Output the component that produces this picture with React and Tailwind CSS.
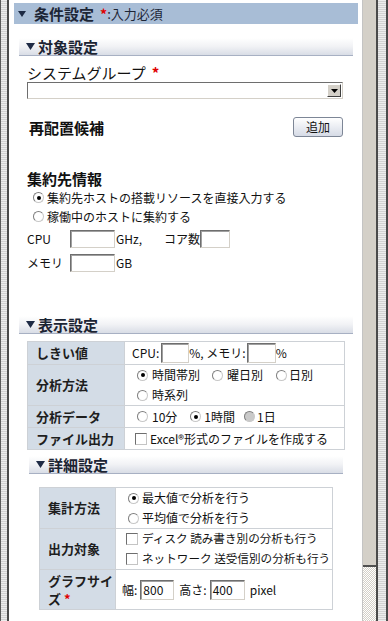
import React from 'react';

function Tri({ className = '', w = 9, h = 7, color = '#1f2b45' }) {
  return (
    <svg width={w} height={h} viewBox={`0 0 ${w} ${h}`} className={className}>
      <polygon points={`0,0 ${w},0 ${w / 2},${h}`} fill={color} />
    </svg>
  );
}

function Band({ title, className = '' }) {
  return (
    <div
      className={`flex h-[18px] items-center border-b border-[#a7b0c3] bg-linear-to-b from-white via-[#f1f2f5] to-[#d9dde6] ${className}`}
    >
      <Tri className="ml-[7px] mr-[3px]" />
      <span className="text-[15px] font-bold leading-none text-[#1c2433]">{title}</span>
    </div>
  );
}

function Radio({ checked, disabled, className = '' }) {
  return (
    <span
      className={`inline-flex h-[11px] w-[11px] shrink-0 items-center justify-center rounded-full border border-t-[#7e7e7e] border-l-[#7e7e7e] border-b-[#c8c8c8] border-r-[#c8c8c8] ${
        disabled ? 'bg-[#c9c9c9]' : 'bg-white'
      } ${className}`}
    >
      {checked && <span className="h-[4px] w-[4px] rounded-full bg-black" />}
    </span>
  );
}

function Check({ className = '' }) {
  return (
    <span
      className={`inline-block h-[12px] w-[12px] shrink-0 border border-t-[#6e6e6e] border-l-[#6e6e6e] border-b-[#c4c4c4] border-r-[#c4c4c4] bg-white ${className}`}
    />
  );
}

function Field({ className = '', children }) {
  return (
    <span
      className={`inline-flex shrink-0 items-center border border-t-[#6e6e6e] border-l-[#6e6e6e] border-b-[#d4d0c8] border-r-[#d4d0c8] bg-white pl-[2px] shadow-[inset_1px_1px_0_#a0a0a0] ${className}`}
    >
      {children}
    </span>
  );
}

const labelCls =
  'border border-[#cdd1d6] bg-[#d3dce6] pl-[8px] text-left align-middle text-[13px] font-bold leading-[18px] text-[#1e1e1e]';
const cellCls = 'border border-[#cdd1d6] align-middle text-[12px] leading-none';

export default function App() {
  return (
    <div className="flex h-[621px] w-[388px] overflow-hidden bg-white font-['Noto_Sans_CJK_JP','Noto_Sans',sans-serif] text-[12px] text-[#111]">
      {/* left frame */}
      <div className="w-[9px] shrink-0 border-l border-r-2 border-l-[#5a5a5a] border-r-[#4a4a4a] bg-[image:repeating-linear-gradient(to_bottom,#ececec_0px,#ececec_1px,#d2d2d2_1px,#d2d2d2_2px)]" />

      {/* content */}
      <div className="flex-1 bg-white pl-[5px] pr-[4px]">
        <div className="mt-[3px] flex h-[21px] items-center bg-[#a8bdd6]">
          <Tri className="ml-[4px]" w={8} h={6} color="#1c2a44" />
          <span className="ml-[8px] text-[15px] font-bold leading-none text-[#1d2636]">条件設定</span>
          <span className="ml-[6px] text-[14px] font-bold leading-none text-[#e00000]">*</span>
          <span className="text-[13px] leading-none text-[#1d2636]">:入力必須</span>
        </div>

        <div className="px-[5px]">
          <Band title="対象設定" className="mt-[14px]" />

          <div className="pl-[8px] pr-[10px]">
            <div className="mt-[9px] flex h-[15px] items-center text-[15px] leading-none">
              システムグループ
              <span className="ml-[6px] font-bold text-[#e00000]">*</span>
            </div>
            <div className="mt-[2px] flex h-[17px] items-stretch border border-t-[#6e6e6e] border-l-[#6e6e6e] border-b-[#d4d0c8] border-r-[#d4d0c8] bg-white">
              <div className="flex-1" />
              <div className="m-[1px] flex w-[14px] items-center justify-center border border-t-white border-l-white border-b-[#404040] border-r-[#404040] bg-[#d4d0c8]">
                <Tri w={7} h={4} color="#000" />
              </div>
            </div>

            <div className="mt-[18px] flex h-[20px] items-center justify-between">
              <span className="ml-[2px] text-[15px] font-bold leading-none">再配置候補</span>
              <span className="flex h-[20px] w-[50px] items-center justify-center rounded-[3px] border border-[#7d8696] bg-linear-to-b from-white to-[#d6dbe6] text-[12px] leading-none">
                追加
              </span>
            </div>

            <div className="mt-[34px] flex h-[15px] items-center text-[15px] font-bold leading-none">集約先情報</div>
            <div className="mt-[2px] flex h-[19px] items-center">
              <Radio checked className="ml-[6px]" />
              <span className="ml-[3px] leading-none">集約先ホストの搭載リソースを直接入力する</span>
            </div>
            <div className="flex h-[19px] items-center">
              <Radio className="ml-[6px]" />
              <span className="ml-[3px] leading-none">稼働中のホストに集約する</span>
            </div>

            <div className="mt-[4px] flex h-[18px] items-center leading-none">
              <span className="w-[43px]">CPU</span>
              <Field className="h-[18px] w-[45px]" />
              <span className="ml-[1px] w-[48px]">GHz,</span>
              <span>コア数</span>
              <Field className="h-[18px] w-[30px]" />
            </div>
            <div className="mt-[6px] flex h-[18px] items-center leading-none">
              <span className="w-[43px]">メモリ</span>
              <Field className="h-[18px] w-[45px]" />
              <span className="ml-[1px]">GB</span>
            </div>
          </div>

          <Band title="表示設定" className="mt-[44px]" />

          <table className="ml-[8px] mt-[7px] w-[318px] border-collapse">
            <tbody>
              <tr className="h-[23px]">
                <th className={`${labelCls} w-[97px]`}>しきい値</th>
                <td className={`${cellCls} pl-[7px]`}>
                  <div className="flex items-center">
                    <span>CPU:</span>
                    <Field className="ml-[2px] h-[20px] w-[28px]" />
                    <span>%, メモリ:</span>
                    <Field className="ml-[1px] h-[20px] w-[29px]" />
                    <span>%</span>
                  </div>
                </td>
              </tr>
              <tr className="h-[41px]">
                <th className={labelCls}>分析方法</th>
                <td className={`${cellCls} pl-[12px]`}>
                  <div className="flex h-[20px] items-center">
                    <Radio checked />
                    <span className="ml-[4px]">時間帯別</span>
                    <Radio className="ml-[12px]" />
                    <span className="ml-[4px]">曜日別</span>
                    <Radio className="ml-[13px]" />
                    <span className="ml-[2px]">日別</span>
                  </div>
                  <div className="flex h-[20px] items-center">
                    <Radio />
                    <span className="ml-[4px]">時系列</span>
                  </div>
                </td>
              </tr>
              <tr className="h-[22px]">
                <th className={labelCls}>分析データ</th>
                <td className={`${cellCls} pl-[12px]`}>
                  <div className="flex items-center">
                    <Radio />
                    <span className="ml-[4px]">10分</span>
                    <Radio checked className="ml-[13px]" />
                    <span className="ml-[3px]">1時間</span>
                    <Radio disabled className="ml-[9px]" />
                    <span className="ml-[2px]">1日</span>
                  </div>
                </td>
              </tr>
              <tr className="h-[22px]">
                <th className={labelCls}>ファイル出力</th>
                <td className={`${cellCls} pl-[10px]`}>
                  <div className="flex items-center">
                    <Check />
                    <span className="ml-[3px] whitespace-nowrap text-[12px]">Excel®形式のファイルを作成する</span>
                  </div>
                </td>
              </tr>
            </tbody>
          </table>

          <Band title="詳細設定" className="mx-[10px] mt-[6px]" />

          <table className="ml-[20px] mt-[13px] w-[294px] border-collapse">
            <tbody>
              <tr className="h-[41px]">
                <th className={`${labelCls} w-[76px]`}>集計方法</th>
                <td className={`${cellCls} pl-[12px]`}>
                  <div className="flex h-[20px] items-center">
                    <Radio checked />
                    <span className="ml-[3px]">最大値で分析を行う</span>
                  </div>
                  <div className="flex h-[20px] items-center">
                    <Radio />
                    <span className="ml-[3px]">平均値で分析を行う</span>
                  </div>
                </td>
              </tr>
              <tr className="h-[41px]">
                <th className={labelCls}>出力対象</th>
                <td className={`${cellCls} pl-[10px]`}>
                  <div className="flex h-[20px] items-center">
                    <Check />
                    <span className="ml-[4px] whitespace-nowrap text-[11.6px]">ディスク 読み書き別の分析も行う</span>
                  </div>
                  <div className="flex h-[20px] items-center">
                    <Check />
                    <span className="ml-[4px] whitespace-nowrap text-[11.6px]">ネットワーク 送受信別の分析も行う</span>
                  </div>
                </td>
              </tr>
              <tr className="h-[40px]">
                <th className={labelCls}>
                  グラフサイ
                  <br />
                  ズ <span className="text-[#e00000]">*</span>
                </th>
                <td className={`${cellCls} pl-[6px]`}>
                  <div className="flex items-center">
                    <span>幅:</span>
                    <Field className="ml-[3px] h-[20px] w-[34px] text-[12px]">800</Field>
                    <span className="ml-[5px]">高さ:</span>
                    <Field className="ml-[3px] h-[20px] w-[35px] text-[12px]">400</Field>
                    <span className="ml-[5px]">pixel</span>
                  </div>
                </td>
              </tr>
            </tbody>
          </table>
        </div>
      </div>

      {/* scrollbar */}
      <div className="flex w-[26px] shrink-0">
        <div className="flex w-[14px] flex-col border-l border-[#c4c4c4]">
          <div className="h-[567px] border-b-2 border-[#505050] bg-[#d4d0c8]" />
          <div className="flex-1 bg-[image:repeating-conic-gradient(#d4d0c8_0%_25%,#ffffff_0%_50%)] bg-[length:2px_2px]" />
        </div>
        <div className="w-[2px] bg-[#4a4a4a]" />
        <div className="w-[8px] bg-[image:repeating-linear-gradient(to_bottom,#ececec_0px,#ececec_1px,#d2d2d2_1px,#d2d2d2_2px)]" />
        <div className="w-[2px] bg-[#4a4a4a]" />
      </div>
    </div>
  );
}
